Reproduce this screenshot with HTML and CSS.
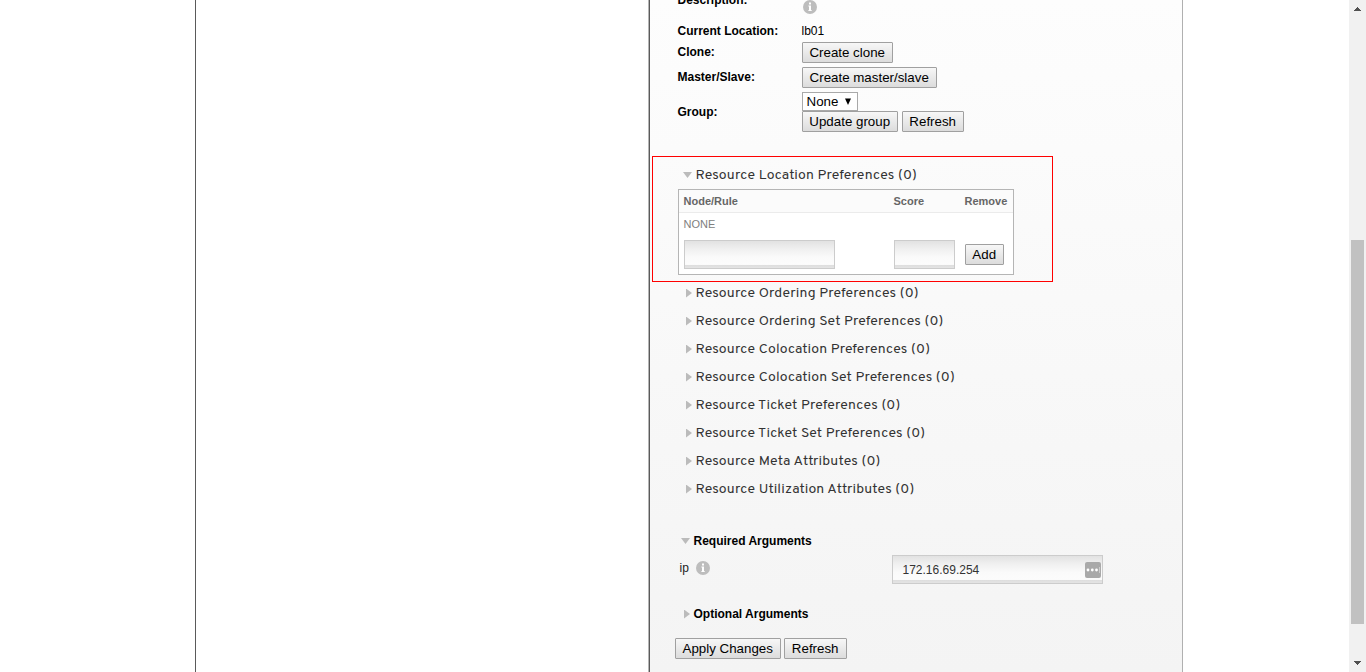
FILE: index.html
```html
<!DOCTYPE html>
<html lang="en">
<head>
<meta charset="utf-8">
<title>Resource</title>
<link rel="stylesheet" href="styles.css">
</head>
<body>
<div class="page">
  <aside class="gutter"></aside>
  <main class="list"></main>
  <section class="panel">
    <div class="row row-desc"><b class="label">Description:</b><svg class="info" viewBox="0 0 14 14"><circle cx="7" cy="7" r="7"/><path d="M6 2.5h2v2H6zM5.4 5.5H8V10h.7v1H5.4v-1H6V6.5h-.6z"/></svg></div>
    <div class="row row-loc"><b class="label">Current Location:</b><span>lb01</span></div>
    <div class="row row-clone"><b class="label">Clone:</b><button class="btn w-clone">Create clone</button></div>
    <div class="row row-master"><b class="label">Master/Slave:</b><button class="btn w-master">Create master/slave</button></div>
    <div class="row row-group"><b class="label">Group:</b>
      <div><div class="select">None<svg viewBox="0 0 8 8"><path d="M1 .5h6L4 7z"/></svg></div>
      <div class="buttons"><button class="btn w-update">Update group</button><button class="btn w-refresh">Refresh</button></div></div>
    </div>
    <div class="highlight">
      <div class="pref open"><i class="down"></i><span>Resource Location Preferences (0)</span></div>
      <div class="table">
        <div class="thead"><b>Node/Rule</b><b>Score</b><b>Remove</b></div>
        <div class="none">NONE</div>
        <div class="inputs"><div class="field node"></div><div class="field score"></div><button class="btn w-add">Add</button></div>
      </div>
    </div>
    <div class="prefs">
      <div class="pref"><i class="right"></i><span>Resource Ordering Preferences (0)</span></div>
      <div class="pref"><i class="right"></i><span>Resource Ordering Set Preferences (0)</span></div>
      <div class="pref"><i class="right"></i><span>Resource Colocation Preferences (0)</span></div>
      <div class="pref"><i class="right"></i><span>Resource Colocation Set Preferences (0)</span></div>
      <div class="pref"><i class="right"></i><span>Resource Ticket Preferences (0)</span></div>
      <div class="pref"><i class="right"></i><span>Resource Ticket Set Preferences (0)</span></div>
      <div class="pref"><i class="right"></i><span>Resource Meta Attributes (0)</span></div>
      <div class="pref"><i class="right"></i><span>Resource Utilization Attributes (0)</span></div>
    </div>
    <div class="args required"><i class="down"></i><b>Required Arguments</b></div>
    <div class="arg">
      <span class="name">ip</span><svg class="info" viewBox="0 0 14 14"><circle cx="7" cy="7" r="7"/><path d="M6 2.5h2v2H6zM5.4 5.5H8V10h.7v1H5.4v-1H6V6.5h-.6z"/></svg>
      <div class="field ip"><span>172.16.69.254</span><svg class="dots" viewBox="0 0 16 16"><rect width="16" height="16" rx="2" fill="#a9a9a9"/><g fill="#fff"><circle cx="3" cy="8" r="1.4"/><circle cx="7.3" cy="8" r="1.4"/><circle cx="11.5" cy="8" r="1.4"/><path d="M14 5h.6v6H14z" opacity=".7"/></g></svg></div>
    </div>
    <div class="args optional"><i class="right"></i><b>Optional Arguments</b></div>
    <div class="footer"><button class="btn w-apply">Apply Changes</button><button class="btn w-refresh2">Refresh</button></div>
  </section>
  <div class="space"></div>
  <div class="scrollbar"><svg viewBox="0 0 7 4"><path d="M3 0h1v1h1v1h1v1h1v1H0V3h1V2h1V1h1z"/></svg><div class="thumb"></div><svg class="arrow-down" viewBox="0 0 7 4"><path d="M0 0h7v1H6v1H5v1H4v1H3V3H2V2H1V1H0z"/></svg></div>
</div>
</body>
</html>
```

FILE: styles.css
```css
* { box-sizing: border-box; }
body { margin: 0; overflow: hidden; background: #fff; color: #000; font: 12px/14px "Liberation Sans", Arial, sans-serif; }
.page { display: flex; width: 1366px; height: 672px; overflow: hidden; }
.gutter { width: 196px; border-right: 1px solid #5a5a5a; }
.list { width: 452px; }
.panel { width: 535px; border-left: 1px solid #b5b5b5; border-right: 1px solid #b0b0b0; box-shadow: inset 1px 0 #5a5a5a; background: linear-gradient(#fdfdfd, #f4f4f4); }
.space { flex: 1; }
.row { display: flex; margin-left: 28.5px; }
.label { width: 124.5px; flex: none; }
.row-desc { height: 24px; }
.row-desc .label { margin-top: -7px; }
.info { width: 14px; height: 14px; fill: #bdbdbd; display: block; }
.info path { fill: #fff; }
.row-desc .info { margin-left: 1px; }
.row-loc { height: 18px; }
.row-loc span { margin-left: -.5px; }
.row-clone { height: 25px; }
.row-master { height: 25px; }
.row-clone .label, .row-master .label { margin-top: 3px; }
.row-group { height: 64px; }
.row-group .label { margin-top: 13px; }
.btn { height: 21px; padding: 0 .6px 0 0; border: 1px solid #a0a0a0; border-radius: 1px; background: linear-gradient(#f7f7f7, #dcdcdc); color: #000; font: 13.333px/17px "Liberation Sans", Arial, sans-serif; white-space: nowrap; flex: none; }
.w-clone { width: 91px; }
.w-master { width: 135px; }
.w-update { width: 96px; }
.w-refresh { width: 62px; }
.w-add { width: 39px; }
.w-apply { width: 106px; }
.w-refresh2 { width: 63px; }
.select { display: flex; align-items: center; width: 56px; height: 19px; padding: 0 5px 0 3.5px; justify-content: space-between; border: 1px solid #a9a9a9; background: #fff; font-size: 13.333px; }
.select svg { width: 8px; height: 8px; }
.buttons { display: flex; gap: 4px; }
.highlight { width: 401px; height: 126px; margin-left: 3px; padding: 4px 0 0 25px; border: 1px solid #f00; }
.pref { display: flex; align-items: center; height: 28px; color: #333; font: 14px/20px Overpass, "Noto Sans", sans-serif; letter-spacing: .17px; white-space: nowrap; }
.pref span { padding-top: 2px; }
.open { padding-left: 5px; }
i { flex: none; }
.down { width: 9px; height: 6px; background: #bbb; clip-path: polygon(0 0, 100% 0, 50% 100%); margin-right: 3.5px; }
.right { width: 6px; height: 9px; background: #bbb; clip-path: polygon(0 0, 100% 50%, 0 100%); margin-right: 3.5px; }
.table { width: 336px; height: 86px; border: 1px solid #b5b5b5; background: #fff; color: #666; font-size: 11px; }
.thead { display: grid; grid-template-columns: 210px 71px 1fr; height: 23px; padding: 4px 0 0 4.5px; border-bottom: 1px solid #ebebeb; background: #fbfbfb; }
.none { height: 27px; padding: 4px 0 0 4.5px; color: #808080; }
.inputs { display: flex; padding-left: 5px; }
.field { height: 29px; border: 1px solid #ccc; background: linear-gradient(#e2e2e2, #f0f0f0 30%, #fafafa 60%, #fcfcfc 87%, #ddd 88%, #e4e4e4); }
.node { width: 151px; margin-right: 59px; }
.score { width: 61px; margin-right: 10px; }
.inputs .btn { margin-top: 4px; }
.prefs { margin: -3px 0 0 37px; height: 254px; }
.args { display: flex; align-items: center; height: 16px; }
.required { padding-left: 32px; }
.optional { margin-top: 21px; padding-left: 35px; }
.arg { display: flex; height: 36px; padding: 6px 0 0 30.5px; }
.name { width: 16.5px; margin-top: 6px; color: #222; }
.arg .info { margin-top: 6px; }
.ip { display: flex; align-items: center; justify-content: space-between; width: 211px; margin-left: 182px; padding: 0 1px 0 9.5px; color: #333; }
.dots { width: 16px; height: 16px; }
.footer { display: flex; gap: 3px; margin: 16px 0 0 26px; }
.scrollbar { display: flex; flex-direction: column; align-items: center; width: 17px; padding-top: 7px; background: #f1f1f1; }
.scrollbar svg { width: 7px; height: 4px; fill: #505050; }
.thumb { width: 13px; height: 384px; margin: 229px 0 37px; background: #c1c1c1; }
```
